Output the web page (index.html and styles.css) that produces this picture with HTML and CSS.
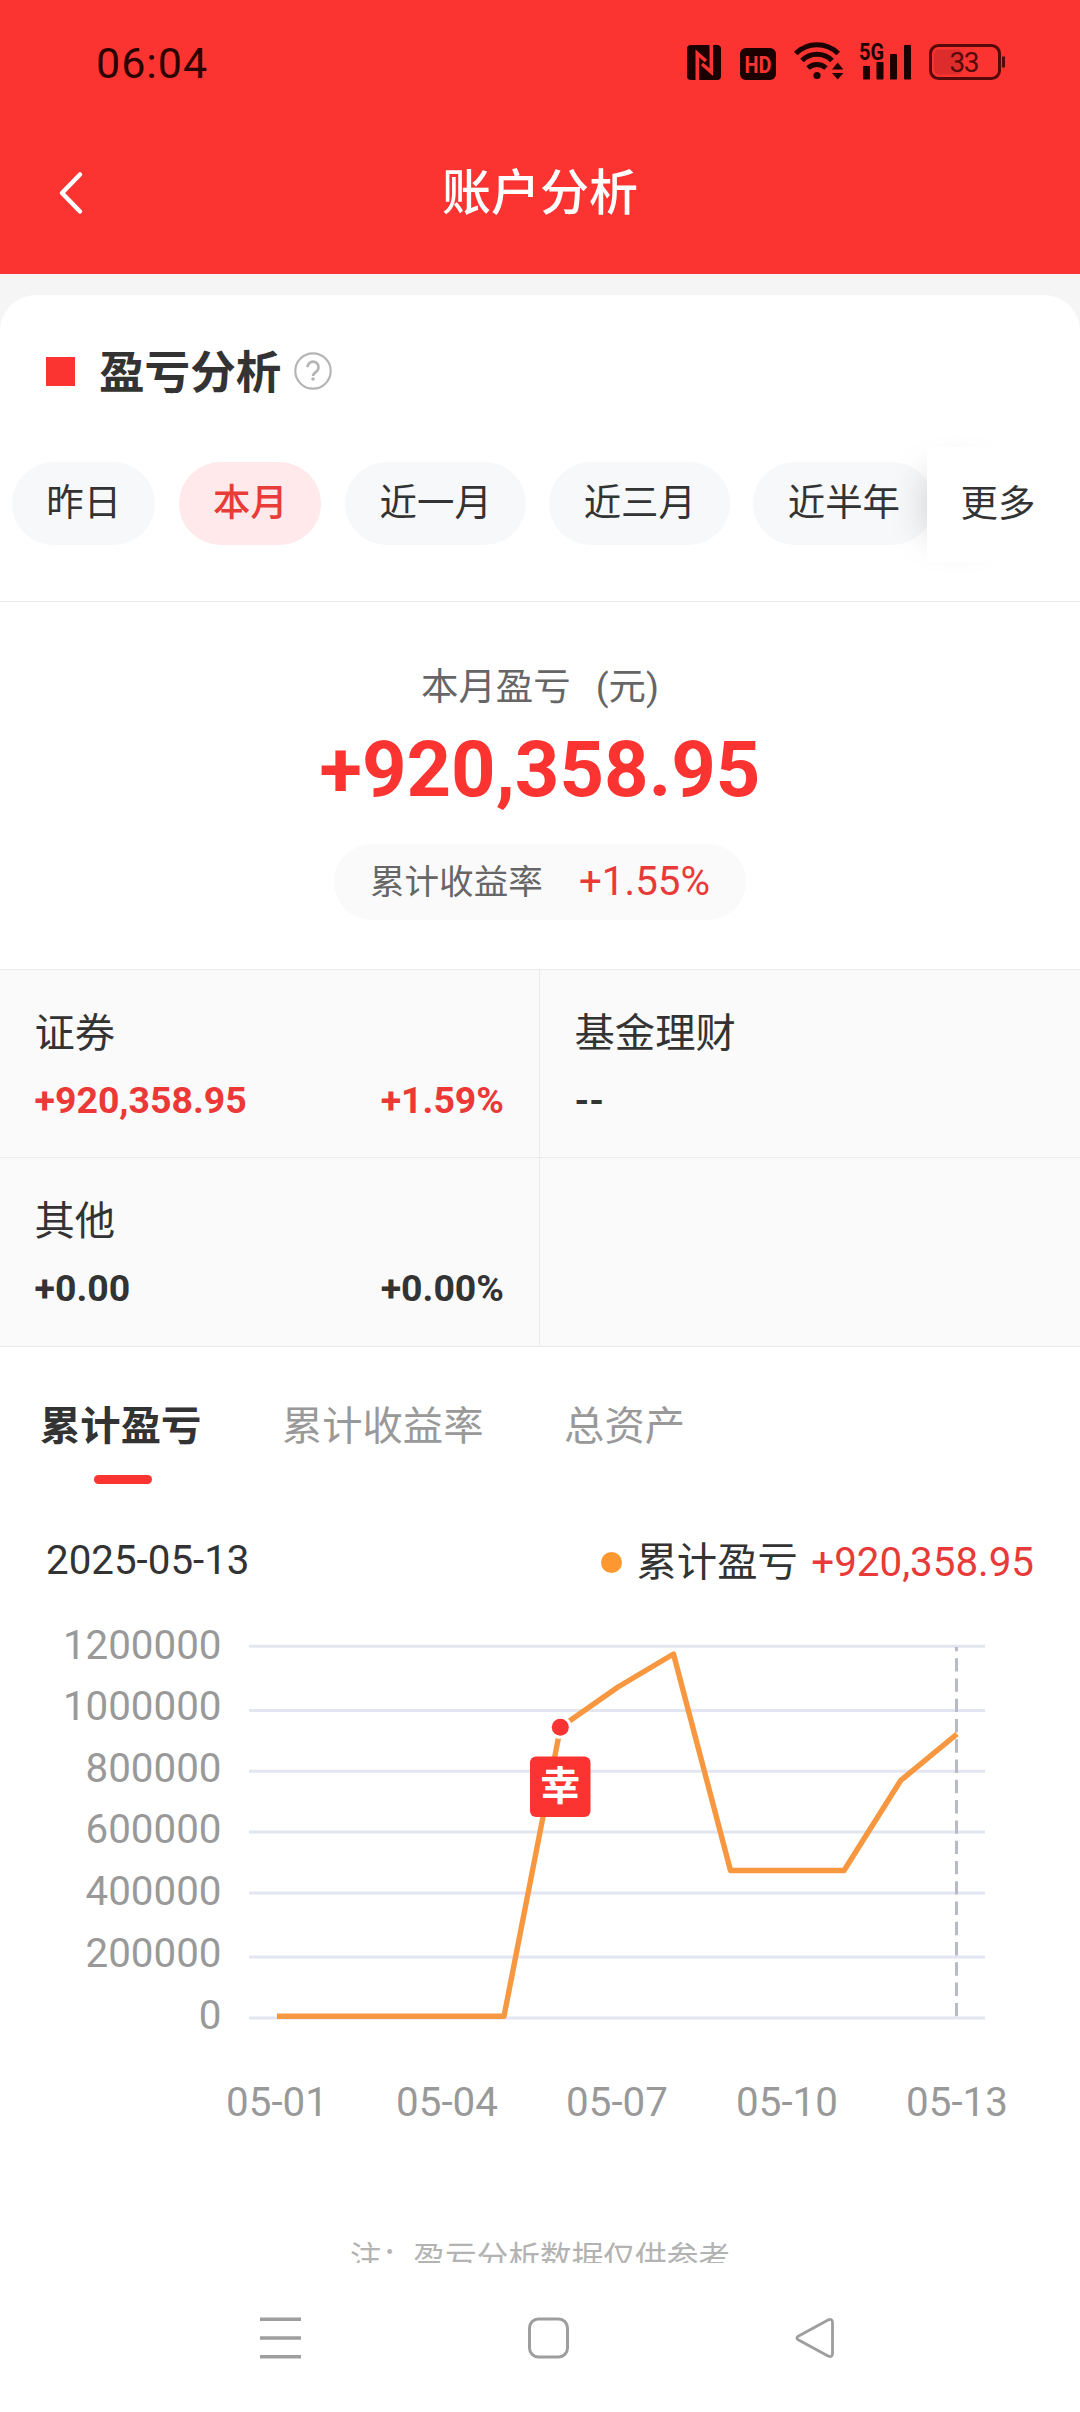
FILE: index.html
```html
<!DOCTYPE html>
<html lang="zh-CN">
<head>
<meta charset="utf-8">
<title>账户分析</title>
<link rel="stylesheet" href="styles.css">
</head>
<body>
<div class="screen">
  <div class="top">
    <div class="status">
      <span class="clock">06:04</span>
      <div class="status-icons">
        <svg class="nfc" width="34" height="35" viewBox="0 0 34 35">
          <rect width="34" height="35" rx="4" fill="#1c0000"/>
          <path d="M10.300 35V8.500L19 16M24.300 0V27L15 19" fill="none" stroke="#fb3431" stroke-width="3.600"/>
        </svg>
        <svg class="hd" width="36" height="32" viewBox="0 0 36 32">
          <rect width="36" height="32" rx="6" fill="#1c0000"/>
          <text x="18" y="25" text-anchor="middle" font-size="24" font-weight="700" textLength="27" lengthAdjust="spacingAndGlyphs" fill="#fb3431">HD</text>
        </svg>
        <svg class="wifi" width="49" height="39" viewBox="0 0 49 39">
          <g fill="none" stroke="#1c0000" stroke-width="5">
            <path d="M1.800 12.500a30 30 0 0 1 42.400 0"/>
            <path d="M8 19.500a21 21 0 0 1 30 0"/>
            <path d="M14 27a13 13 0 0 1 18 0"/>
          </g>
          <circle cx="23" cy="34.500" r="3.600" fill="#1c0000"/>
          <path d="M38 28.500l5.700-7 5.700 7zM38 32l5.700 6.500 5.700-6.500z" fill="#1c0000"/>
        </svg>
        <svg class="signal" width="52" height="46" viewBox="0 -8 52 46">
          <g fill="#1c0000">
            <rect x="4" y="24" width="7" height="13.500" rx="1"/>
            <rect x="17.500" y="20" width="7" height="17.500" rx="1"/>
            <rect x="31" y="12" width="7" height="25.500" rx="1"/>
            <rect x="45" y="3" width="7" height="34.500" rx="1"/>
            <text x="0" y="18" font-size="23.500" font-weight="700" textLength="25" lengthAdjust="spacingAndGlyphs">5G</text>
          </g>
        </svg>
        <svg class="battery" width="77" height="36" viewBox="0 0 77 36">
          <rect x="5" y="5.500" width="28" height="25" rx="5" fill="#dc2c2b"/>
          <rect x="1.500" y="1.500" width="69" height="33" rx="8" fill="none" stroke="#560908" stroke-width="3"/>
          <path d="M74.500 12.500v11" stroke="#560908" stroke-width="3"/>
          <text x="35.500" y="28" text-anchor="middle" font-size="28" textLength="30" fill="#560908">33</text>
        </svg>
      </div>
    </div>
    <div class="navbar">
      <svg class="back" width="28" height="44" viewBox="0 0 28 44"><path d="M23 3.500L5 22l18 18.500" fill="none" stroke="#fff" stroke-width="4.500" stroke-linecap="round" stroke-linejoin="round"/></svg>
      <h1 class="page-title">账户分析</h1>
    </div>
  </div>

  <div class="content">
    <div class="card">
      <div class="section-head">
        <span class="square"></span>
        <h2 class="section-title">盈亏分析</h2>
        <svg class="help" width="38" height="38" viewBox="0 0 38 38">
          <circle cx="19" cy="19" r="17.700" fill="none" stroke="#b5b5b5" stroke-width="2.200"/>
          <path d="M13.500 15.200a5.500 5.500 0 1 1 8.800 4.400c-2.200 1.600-3.300 2.400-3.300 4.500" fill="none" stroke="#b5b5b5" stroke-width="2.600"/>
          <circle cx="19" cy="27" r="1.800" fill="#b5b5b5"/>
        </svg>
      </div>

      <div class="filters">
        <div class="pills">
          <span class="pill">昨日</span>
          <span class="pill pill-active">本月</span>
          <span class="pill">近一月</span>
          <span class="pill">近三月</span>
          <span class="pill">近半年</span>
        </div>
        <div class="more">更多</div>
      </div>

      <div class="summary">
        <div class="summary-label"><span>本月盈亏</span><span>(元)</span></div>
        <div class="summary-value">+920,358.95</div>
        <div class="rate"><span class="rate-label">累计收益率</span><span class="rate-value">+1.55%</span></div>
      </div>

      <div class="assets">
        <div class="cell">
          <div class="cell-name">证券</div>
          <div class="cell-row up"><span>+920,358.95</span><span>+1.59%</span></div>
        </div>
        <div class="cell">
          <div class="cell-name">基金理财</div>
          <div class="cell-row"><span>--</span></div>
        </div>
        <div class="cell">
          <div class="cell-name">其他</div>
          <div class="cell-row"><span>+0.00</span><span>+0.00%</span></div>
        </div>
        <div class="cell"></div>
      </div>

      <div class="tabs">
        <div class="tab tab-active">累计盈亏</div>
        <div class="tab">累计收益率</div>
        <div class="tab">总资产</div>
      </div>

      <div class="chart-head">
        <span class="date">2025-05-13</span>
        <div class="legend"><span class="dot"></span><span class="legend-name">累计盈亏</span><span class="legend-value">+920,358.95</span></div>
      </div>

      <svg class="chart" width="1080" height="560" viewBox="0 0 1080 560">
        <path class="gridlines" d="M249 59.200H985M249 123.400H985M249 184.200H985M249 245H985M249 306H985M249 370H985M249 431H985"/>
        <g class="y-labels">
          <text x="221.500" y="71.500">1200000</text>
          <text x="221.500" y="132.500">1000000</text>
          <text x="221.500" y="194.500">800000</text>
          <text x="221.500" y="256">600000</text>
          <text x="221.500" y="318">400000</text>
          <text x="221.500" y="379.500">200000</text>
          <text x="221.500" y="441.500">0</text>
        </g>
        <g class="x-labels">
          <text x="277" y="528.500">05-01</text>
          <text x="447" y="528.500">05-04</text>
          <text x="617" y="528.500">05-07</text>
          <text x="787" y="528.500">05-10</text>
          <text x="957" y="528.500">05-13</text>
        </g>
        <path class="cursor" d="M956.500 429.300V60"/>
        <path class="series" d="M277 429.300H504L560.500 140.300L618 100L673.500 67L730.500 283.500H844L900.500 193.700L957 147"/>
        <circle cx="560.300" cy="140.300" r="11.500" fill="#fff"/>
        <circle cx="560.300" cy="140.300" r="8.500" fill="#f93433"/>
        <rect x="530" y="169.500" width="60.500" height="60.500" rx="6" fill="#fb3431"/>
        <text class="badge" x="560.300" y="213">幸</text>
      </svg>

      <p class="note">注：盈亏分析数据仅供参考</p>
    </div>
  </div>

  <div class="system-nav">
    <svg width="41" height="42" viewBox="0 0 41 42"><path d="M0 2.300H41M0 21H41M0 39.700H41" stroke="#9e9e9e" stroke-width="3.400"/></svg>
    <svg width="41" height="42" viewBox="0 0 41 42"><rect x="1.500" y="2" width="38" height="38" rx="9" fill="none" stroke="#9e9e9e" stroke-width="3"/></svg>
    <svg width="39" height="42" viewBox="0 0 39 42"><path d="M33.500 2.800L3.200 19.200Q.5 21 3.200 22.800L33.500 39.200Q37.500 40.500 37.500 36.500V5.500Q37.500 1.500 33.500 2.800Z" fill="none" stroke="#9e9e9e" stroke-width="2.800" stroke-linejoin="round"/></svg>
  </div>
</div>
</body>
</html>
```
FILE: styles.css
```css
* { box-sizing: border-box; }

body {
  margin: 0;
  background: #fff;
  color: #333;
  font-family: Roboto, "Noto Sans CJK SC", sans-serif;
}

h1, h2, p { margin: 0; }
svg { display: block; flex: none; }

.screen {
  display: flex;
  flex-direction: column;
  width: 1080px;
  height: 2412px;
  overflow: hidden;
}

.top { background: #fb3431; }

.status {
  display: flex;
  justify-content: space-between;
  height: 126px;
  padding: 0 74px 0 96px;
  line-height: 126px;
}

.clock {
  font-size: 43px;
  letter-spacing: 1px;
  color: #2a0000;
}

.status-icons { display: flex; align-items: flex-end; height: 80px; line-height: 1; }
.hd { margin-left: 19px; }
.wifi { margin-left: 18px; }
.signal { margin-left: 16px; }
.battery { margin-left: 18px; }

.navbar {
  display: grid;
  grid-template-columns: 200px 1fr 200px;
  align-items: center;
  height: 148px;
  padding-bottom: 12px;
}

.back { margin: 0 0 3px 57px; }

.page-title {
  font-size: 49px;
  font-weight: 500;
  line-height: 60px;
  text-align: center;
  color: #fff;
}

.content {
  height: 1989px;
  padding-top: 21px;
  overflow: hidden;
  background: #f5f5f5;
}

.card {
  height: 1968px;
  border-radius: 36px 36px 0 0;
  background: #fff;
  overflow: hidden;
}

.section-head {
  display: flex;
  align-items: center;
  height: 152px;
  padding-left: 46px;
}

.square { width: 29px; height: 29px; background: #fb3431; }

.section-title {
  margin-left: 24px;
  padding-top: 6px;
  font-size: 45.600px;
  font-weight: 700;
  line-height: 60px;
}

.help { margin-left: 12.500px; }

.filters {
  position: relative;
  width: 1034px;
  height: 154px;
  padding: 15px 0 0 12px;
}

.pills { display: flex; gap: 23.800px; }

.pill {
  flex: none;
  height: 83px;
  padding: 0 33.700px 0 34.300px;
  border-radius: 42px;
  background: #f7f8fa;
  font-size: 37.440px;
  line-height: 83px;
}

.pill-active {
  background: #ffe9ea;
  color: #e83c39;
  font-weight: 500;
}

.more {
  position: absolute;
  top: 0;
  right: 0;
  width: 107px;
  height: 115px;
  padding-left: 33.500px;
  background: #fff;
  box-shadow: -24px 0 40px -28px rgba(0, 0, 0, .22);
  clip-path: inset(-14px 0 -14px -60px);
  font-size: 37.440px;
  line-height: 115px;
  white-space: nowrap;
}

.summary {
  display: flex;
  flex-direction: column;
  align-items: center;
  height: 368px;
  padding-top: 60px;
  border-top: 1px solid #e8e8e8;
}

.summary-label {
  display: flex;
  gap: 25px;
  font-size: 37.440px;
  line-height: 50px;
  color: #666;
}

.summary-value {
  margin-top: 13px;
  font-size: 77.760px;
  font-weight: 700;
  line-height: 90px;
  color: #fb3431;
}

.rate {
  display: flex;
  align-items: center;
  justify-content: space-between;
  width: 412px;
  height: 76px;
  margin-top: 29px;
  padding: 0 36px;
  border-radius: 38px;
  background: #fafafa;
  line-height: 74px;
}

.rate-label { font-size: 34.560px; color: #666; }
.rate-value { font-size: 40.320px; color: #e83a38; }

.assets {
  display: grid;
  grid-template-columns: 539px 540px;
  grid-template-rows: 187px 188px;
  gap: 1px;
  padding: 1px 0;
  background: #ebebeb;
}

.cell { padding: 38.500px 35px 0 34.560px; background: #fafafa; }

.cell-name { font-size: 40.320px; line-height: 50px; }

.cell-row {
  display: flex;
  justify-content: space-between;
  margin-top: 16.500px;
  font-size: 37.440px;
  font-weight: 700;
  line-height: 50px;
}

.up { color: #ec3836; }

.tabs {
  display: flex;
  gap: 80.640px;
  height: 137px;
  padding: 54.500px 0 0 40px;
}

.tab {
  font-size: 40.320px;
  line-height: 50px;
  color: #999;
}

.tab-active { font-weight: 700; color: #333; }

.tab-active::after {
  content: "";
  display: block;
  width: 58px;
  height: 9px;
  margin: 23.500px 0 0 54px;
  border-radius: 5px;
  background: #fb3431;
}

.chart-head {
  display: flex;
  align-items: center;
  justify-content: space-between;
  height: 50px;
  margin-top: 53px;
  padding: 0 46px;
  font-size: 40.320px;
  line-height: 52px;
}

.date { margin-bottom: 3px; }
.legend { display: flex; align-items: center; }
.legend-name, .legend-value { padding-top: 2px; }
.dot { width: 21px; height: 21px; border-radius: 50%; background: #fd9730; }
.legend-name { margin-left: 15px; }
.legend-value { margin-left: 13.500px; color: #e83a38; }

.gridlines { stroke: #e2e6f0; stroke-width: 3; }
.y-labels, .x-labels { font-size: 40.320px; fill: #999; }
.y-labels { text-anchor: end; }
.x-labels { text-anchor: middle; }
.cursor { stroke: #b9bac8; stroke-width: 3; stroke-dasharray: 13.400 6.880; }
.series { fill: none; stroke: #f79840; stroke-width: 5.400; stroke-linejoin: round; }
.badge { font-size: 40px; font-weight: 700; fill: #fff; text-anchor: middle; }

.note {
  margin-top: 92px;
  font-size: 31.680px;
  line-height: 40px;
  text-align: center;
  color: #b3b3b3;
}

.system-nav {
  display: flex;
  align-items: center;
  justify-content: space-between;
  height: 149px;
  padding: 0 246px 0 260px;
  background: #fff;
}
```
